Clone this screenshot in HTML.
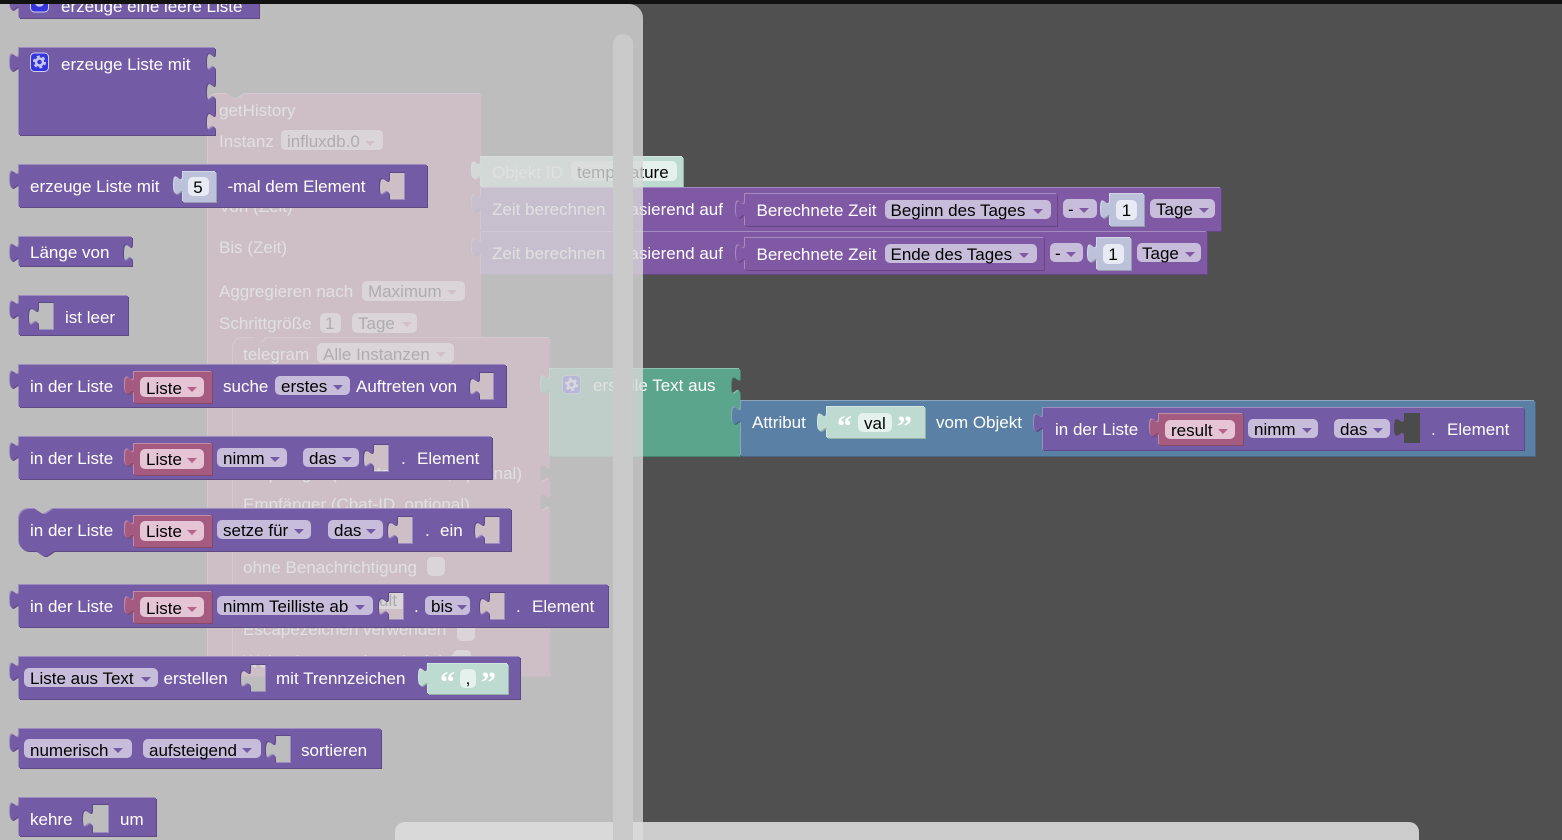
<!DOCTYPE html>
<html><head><meta charset="utf-8"><style>
html,body{margin:0;padding:0;background:#505050;width:1562px;height:840px;overflow:hidden}
svg{display:block;position:absolute;left:0;top:0}
text{font-family:"Liberation Sans",sans-serif;font-size:17px;white-space:pre}
.w{fill:#fff}.k{fill:#000}
.q{font-family:"Liberation Serif",serif;font-weight:bold;font-size:30px;fill:#fff}
path{fill-rule:evenodd}
.p{fill:#745ba5;filter:drop-shadow(1px 1px 0 #5d4984) drop-shadow(-1px -1px 0 #9e8cc0)}
.v{fill:#8059a5;filter:drop-shadow(1px 1px 0 #664784) drop-shadow(-1px -1px 0 #a68bc0)}
.r{fill:#a55b80;filter:drop-shadow(1px 1px 0 #844966) drop-shadow(-1px -1px 0 #c08ca6)}
.g{fill:#5ba58c;filter:drop-shadow(1px 1px 0 #498470) drop-shadow(-1px -1px 0 #8cc0ae)}
.b{fill:#5b80a5;filter:drop-shadow(1px 1px 0 #496684) drop-shadow(-1px -1px 0 #8ca6c0)}
.s{fill:#bdc2db;filter:drop-shadow(1px 1px 0 #979bb0) drop-shadow(-1px -1px 0 #d2d5e6)}
.t{fill:#bddbd1;filter:drop-shadow(1px 1px 0 #97afa7) drop-shadow(-1px -1px 0 #d2e6df)}
.d{fill:#c7bddb}.dr{fill:#e4c4d5}.fn{fill:#e9ebf4}.ft{fill:#e4f1ec}
.a{fill:#745ba5}.ar{fill:#b5648c}.ap{fill:#8059a5}
</style></head><body>
<svg width="1562" height="840" viewBox="0 0 1562 840" xmlns="http://www.w3.org/2000/svg">
<rect width="1562" height="840" fill="#505050"/>

<!-- workspace: getHistory -->
<path class="r" d="M208,104a10,10 0 0 1 10,-10H227l7.500,5h3l7.500,-5H481V676H208Z"/>
<path class="r" d="M550,338V464c0,12.500 -10,-10 -10,9.400s10,-3.100 10,9.400V493c0,12.500 -10,-10 -10,9.400s10,-3.100 10,9.400V676H233V348a10,10 0 0 1 10,-10H255l4,4h4l4,-4Z"/>
<text x="219" y="116" class="w">getHistory</text>
<text x="219" y="147" class="w">Instanz</text>
<rect x="281" y="130" width="102" height="20" rx="5" class="dr"/><text x="287" y="147" class="k">influxdb.0</text><path class="ar" d="M365,141h10l-5,5z"/>
<text x="219" y="212" class="w">Von (Zeit)</text>
<text x="219" y="253" class="w">Bis (Zeit)</text>
<text x="219" y="297" class="w">Aggregieren nach</text>
<rect x="362" y="281" width="103" height="20" rx="5" class="dr"/><text x="368" y="297" class="k">Maximum</text><path class="ar" d="M447,290h10l-5,5z"/>
<text x="219" y="329" class="w">Schrittgröße</text>
<rect x="320" y="313" width="21" height="20" rx="5" class="dr"/><text x="325" y="329" class="k">1</text>
<rect x="352" y="313" width="65" height="20" rx="5" class="dr"/><text x="358" y="329" class="k">Tage</text><path class="ar" d="M402,322h10l-5,5z"/>
<text x="243" y="360" class="w">telegram</text>
<rect x="317" y="343" width="137" height="20" rx="5" class="dr"/><text x="323" y="360" class="k">Alle Instanzen</text><path class="ar" d="M436,352h10l-5,5z"/>
<text x="522" y="479" text-anchor="end" class="w">Empfänger (Benutzername, optional)</text>
<text x="243" y="510" class="w">Empfänger (Chat-ID, optional)</text>
<text x="243" y="573" class="w">ohne Benachrichtigung</text><rect x="427" y="557" width="18" height="19" rx="5" class="dr"/>
<rect x="345" y="590" width="62" height="19" rx="5" class="dr"/><text x="397" y="606" text-anchor="end" class="k">Default</text>
<text x="243" y="635" class="w">Escapezeichen verwenden</text><rect x="457" y="622" width="18" height="19" rx="5" class="dr"/>
<text x="243" y="667" class="w">Webseitenvorschau deaktivieren</text><rect x="453" y="650" width="18" height="19" rx="5" class="dr"/>

<!-- workspace: Objekt ID -->
<path class="t" d="M481,157H683V187H481V180c0,-12.500 -9,10 -9,-9.400s9,3.100 9,-9.400Z"/>
<text x="492" y="178" class="w">Objekt ID</text>
<rect x="571" y="161" width="106" height="20" rx="5" class="ft"/><text x="577" y="178" class="k">temperature</text>

<!-- workspace: Zeit 1 -->
<path class="v" d="M481,188H1221V231H481V213c0,-12.500 -9,10 -9,-9.400s9,3.100 9,-9.400Z"/>
<text x="492" y="215" class="w">Zeit berechnen</text>
<text x="723" y="215" text-anchor="end" class="w">basierend auf</text>
<path class="v" d="M745,194H1057V226H745V219c0,-12.500 -9,10 -9,-9.400s9,3.100 9,-9.400Z"/>
<text x="756.500" y="216" class="w">Berechnete Zeit</text>
<rect x="885" y="200" width="166" height="19" rx="5" class="d"/><text x="890.500" y="216" class="k">Beginn des Tages</text><path class="ap" d="M1033,209h10l-5,5z"/>
<rect x="1063" y="199" width="34" height="19" rx="5" class="d"/><text x="1068" y="215" class="k">-</text><path class="ap" d="M1079,208h10l-5,5z"/>
<path class="s" d="M1110,194H1144V226H1110V219c0,-12.500 -9,10 -9,-9.400s9,3.100 9,-9.400Z"/>
<rect x="1116" y="200" width="21" height="20" rx="5" class="fn"/><text x="1126.500" y="216" text-anchor="middle" class="k">1</text>
<rect x="1150" y="199" width="65" height="19" rx="5" class="d"/><text x="1156" y="215" class="k">Tage</text><path class="ap" d="M1199,208h10l-5,5z"/>

<!-- workspace: Zeit 2 -->
<path class="v" d="M481,232H1207V274H481V257c0,-12.500 -9,10 -9,-9.400s9,3.100 9,-9.400Z"/>
<text x="492" y="259" class="w">Zeit berechnen</text>
<text x="723" y="259" text-anchor="end" class="w">basierend auf</text>
<path class="v" d="M745,238H1044V270H745V263c0,-12.500 -9,10 -9,-9.400s9,3.100 9,-9.400Z"/>
<text x="756.500" y="260" class="w">Berechnete Zeit</text>
<rect x="885" y="244" width="152" height="19" rx="5" class="d"/><text x="890.500" y="260" class="k">Ende des Tages</text><path class="ap" d="M1019,253h10l-5,5z"/>
<rect x="1050" y="243" width="33" height="19" rx="5" class="d"/><text x="1055" y="259" class="k">-</text><path class="ap" d="M1066,252h10l-5,5z"/>
<path class="s" d="M1097,238H1131V270H1097V263c0,-12.500 -9,10 -9,-9.400s9,3.100 9,-9.400Z"/>
<rect x="1103" y="244" width="21" height="20" rx="5" class="fn"/><text x="1113" y="260" text-anchor="middle" class="k">1</text>
<rect x="1137" y="243" width="64" height="19" rx="5" class="d"/><text x="1142" y="259" class="k">Tage</text><path class="ap" d="M1185,252h10l-5,5z"/>

<!-- workspace: erstelle Text aus -->
<path class="g" d="M550,369H740V376c0,12.500 -9,-10 -9,9.400s9,-3.100 9,9.400V456H550V394c0,-12.500 -9,10 -9,-9.400s9,3.100 9,-9.400Z"/>
<rect x="562.500" y="375.500" width="18" height="18" rx="4" fill="#3535e0" stroke="#aab" />
<circle cx="571.500" cy="384.500" r="3.500" fill="none" stroke="#d5d5f5" stroke-width="2.500"/>
<circle cx="571.500" cy="384.500" r="5.500" fill="none" stroke="#d5d5f5" stroke-width="2" stroke-dasharray="3 2.760"/>
<text x="593" y="391" class="w">erstelle Text aus</text>

<!-- workspace: Attribut -->
<path class="b" d="M741,401H1535V456H741V425c0,-12.500 -9,10 -9,-9.400s9,3.100 9,-9.400Z"/>
<text x="752" y="428" class="w">Attribut</text>
<path class="t" d="M827,407H925V438H827V432c0,-12.500 -9,10 -9,-9.400s9,3.100 9,-9.400Z"/>
<text x="837" y="436" class="q">“</text>
<rect x="858" y="413" width="34" height="19" rx="5" class="ft"/><text x="864" y="429" class="k">val</text>
<text x="897" y="436" class="q">”</text>
<text x="936" y="428" class="w">vom Objekt</text>
<path class="p" d="M1043,408H1524V450H1043V432c0,-12.500 -9,10 -9,-9.400s9,3.100 9,-9.400Z"/>
<text x="1055" y="435" class="w">in der Liste</text>
<path class="r" d="M1159,414H1243V445H1159V437c0,-12.500 -9,10 -9,-9.400s9,3.100 9,-9.400Z"/>
<rect x="1165" y="420" width="70" height="19" rx="5" class="dr"/><text x="1171" y="436" class="k">result</text><path class="ar" d="M1218,429h10l-5,5z"/>
<rect x="1248" y="419" width="70" height="19" rx="5" class="d"/><text x="1254" y="435" class="k">nimm</text><path class="a" d="M1302,428h10l-5,5z"/>
<rect x="1334" y="419" width="56" height="19" rx="5" class="d"/><text x="1340" y="435" class="k">das</text><path class="a" d="M1373,428h10l-5,5z"/>
<path d="M1420,413H1404V418c0,12.500 -10,-10 -10,9.400s10,-3.100 10,9.400V443H1420Z" fill="#4b4b4b"/>
<text x="1431" y="435" class="w">.</text><text x="1447" y="435" class="w">Element</text>

<!-- flyout overlay -->
<path d="M0,4H629a14,14 0 0 1 14,14V840H0Z" fill="#d8d8d8" fill-opacity=".8"/>

<!-- flyout blocks -->
<path class="p" d="M19,-13H259V18H19V11c0,-12.500 -9,10 -9,-9.400s9,3.100 9,-9.400Z"/>
<rect x="30.500" y="-7" width="18" height="19" rx="4" fill="#3535e0" stroke="#cfcff5"/>
<circle cx="39.500" cy="2" r="3.500" fill="none" stroke="#c9c9ee" stroke-width="2.500"/>
<text x="61" y="12" class="w">erzeuge eine leere Liste</text>

<path class="p" d="M19,48H215V52c0,12.500 -9,-10 -9,9.400s9,-3.100 9,9.400V82c0,12.500 -9,-10 -9,9.400s9,-3.100 9,9.400V112c0,12.500 -9,-10 -9,9.400s9,-3.100 9,9.400V135H19V72c0,-12.500 -9,10 -9,-9.400s9,3.100 9,-9.400Z"/>
<rect x="30.500" y="53" width="18" height="18.500" rx="4" fill="#3535e0" stroke="#cfcff5"/>
<circle cx="39.500" cy="62" r="3.500" fill="none" stroke="#c9c9ee" stroke-width="2.500"/>
<circle cx="39.500" cy="62" r="5.500" fill="none" stroke="#c9c9ee" stroke-width="2" stroke-dasharray="3 2.760"/>
<text x="61" y="70" class="w">erzeuge Liste mit</text>

<path class="p" d="M19,165H427V207H19V189c0,-12.500 -9,10 -9,-9.400s9,3.100 9,-9.400Z M405,172H389V177c0,12.500 -10,-10 -10,9.400s10,-3.100 10,9.400V200H405Z"/>
<text x="30" y="192" class="w">erzeuge Liste mit</text>
<path class="s" d="M183,172H216V202H183V195c0,-12.500 -9,10 -9,-9.400s9,3.100 9,-9.400Z"/>
<rect x="188" y="177" width="21" height="19" rx="5" class="fn"/><text x="198" y="193" text-anchor="middle" class="k">5</text>
<text x="227.500" y="192" class="w">-mal dem Element</text>

<path class="p" d="M19,237H132V243c0,12.500 -9,-10 -9,9.400s9,-3.100 9,9.400V266H19V262c0,-12.500 -9,10 -9,-9.400s9,3.100 9,-9.400Z"/>
<text x="30" y="258" class="w">Länge von</text>

<path class="p" d="M19,296H128V335H19V319c0,-12.500 -9,10 -9,-9.400s9,3.100 9,-9.400Z M54,302H38V307c0,12.500 -10,-10 -10,9.400s10,-3.100 10,9.400V330H54Z"/>
<text x="65" y="323" class="w">ist leer</text>

<!-- in der Liste suche -->
<path class="p" d="M19,365H506V407H19V389c0,-12.500 -9,10 -9,-9.400s9,3.100 9,-9.400Z M494,372H479V377c0,12.500 -10,-10 -10,9.400s10,-3.100 10,9.400V400H494Z"/>
<text x="30" y="392" class="w">in der Liste</text>
<path class="r" d="M134,372H212V403H134V395c0,-12.500 -9,10 -9,-9.400s9,3.100 9,-9.400Z"/>
<rect x="140" y="377" width="64" height="20" rx="5" class="dr"/><text x="146" y="394" class="k">Liste</text><path class="ar" d="M187,387h10l-5,5z"/>
<text x="223" y="392" class="w">suche</text>
<rect x="275" y="376" width="75" height="19" rx="5" class="d"/><text x="281" y="392" class="k">erstes</text><path class="a" d="M333,385h10l-5,5z"/>
<text x="356" y="392" class="w">Auftreten von</text>

<!-- nimm -->
<path class="p" d="M19,437H492V479H19V461c0,-12.500 -9,10 -9,-9.400s9,3.100 9,-9.400Z M389,444H373V449c0,12.500 -10,-10 -10,9.400s10,-3.100 10,9.400V472H389Z"/>
<text x="30" y="464" class="w">in der Liste</text>
<path class="r" d="M134,444H212V475H134V467c0,-12.500 -9,10 -9,-9.400s9,3.100 9,-9.400Z"/>
<rect x="140" y="449" width="64" height="20" rx="5" class="dr"/><text x="146" y="465" class="k">Liste</text><path class="ar" d="M187,458h10l-5,5z"/>
<rect x="217" y="448" width="70" height="19" rx="5" class="d"/><text x="223" y="464" class="k">nimm</text><path class="a" d="M270,457h10l-5,5z"/>
<rect x="303" y="448" width="56" height="19" rx="5" class="d"/><text x="309" y="464" class="k">das</text><path class="a" d="M342,457h10l-5,5z"/>
<text x="401" y="464" class="w">.</text><text x="417" y="464" class="w">Element</text>

<!-- setze -->
<path class="p" d="M19,519a10,10 0 0 1 10,-10H35l7.500,5h3l7.500,-5H511V551H54l-7.500,5h-3l-7.500,-5H29a10,10 0 0 1 -10,-10Z M413,516H397V521c0,12.500 -10,-10 -10,9.400s10,-3.100 10,9.400V544H413Z M500,516H484V521c0,12.500 -10,-10 -10,9.400s10,-3.100 10,9.400V544H500Z"/>
<text x="30" y="536" class="w">in der Liste</text>
<path class="r" d="M134,516H212V547H134V539c0,-12.500 -9,10 -9,-9.400s9,3.100 9,-9.400Z"/>
<rect x="140" y="521" width="64" height="20" rx="5" class="dr"/><text x="146" y="537" class="k">Liste</text><path class="ar" d="M187,530h10l-5,5z"/>
<rect x="217" y="520" width="94" height="19" rx="5" class="d"/><text x="223" y="536" class="k">setze für</text><path class="a" d="M294,529h10l-5,5z"/>
<rect x="328" y="520" width="55" height="19" rx="5" class="d"/><text x="334" y="536" class="k">das</text><path class="a" d="M366,529h10l-5,5z"/>
<text x="425" y="536" class="w">.</text><text x="440" y="536" class="w">ein</text>

<!-- Teilliste -->
<path class="p" d="M19,585H608V627H19V609c0,-12.500 -9,10 -9,-9.400s9,3.100 9,-9.400Z M404,592H388V597c0,12.500 -10,-10 -10,9.400s10,-3.100 10,9.400V620H404Z M505,592H489V597c0,12.500 -10,-10 -10,9.400s10,-3.100 10,9.400V620H505Z"/>
<text x="30" y="612" class="w">in der Liste</text>
<path class="r" d="M134,592H212V623H134V615c0,-12.500 -9,10 -9,-9.400s9,3.100 9,-9.400Z"/>
<rect x="140" y="597" width="64" height="20" rx="5" class="dr"/><text x="146" y="614" class="k">Liste</text><path class="ar" d="M187,607h10l-5,5z"/>
<rect x="217" y="596" width="156" height="19" rx="5" class="d"/><text x="223" y="612" class="k">nimm Teilliste ab</text><path class="a" d="M355,605h10l-5,5z"/>
<text x="414" y="612" class="w">.</text>
<rect x="425" y="596" width="45" height="19" rx="5" class="d"/><text x="431" y="612" class="k">bis</text><path class="a" d="M457,605h10l-5,5z"/>
<text x="516" y="612" class="w">.</text><text x="532" y="612" class="w">Element</text>

<!-- Liste aus Text -->
<path class="p" d="M19,657H520V699H19V681c0,-12.500 -9,10 -9,-9.400s9,3.100 9,-9.400Z M266,664H250V669c0,12.500 -10,-10 -10,9.400s10,-3.100 10,9.400V692H266Z"/>
<rect x="24" y="668" width="134" height="19" rx="5" class="d"/><text x="30" y="684" class="k">Liste aus Text</text><path class="a" d="M141,677h10l-5,5z"/>
<text x="163.500" y="684" class="w">erstellen</text>
<text x="276" y="684" class="w">mit Trennzeichen</text>
<path class="t" d="M428,664H508V694H428V687c0,-12.500 -9,10 -9,-9.400s9,3.100 9,-9.400Z"/>
<text x="440" y="692" class="q">“</text>
<rect x="460" y="669" width="16" height="19" rx="5" class="ft"/><text x="468" y="684" text-anchor="middle" class="k">,</text>
<text x="481" y="692" class="q">”</text>

<!-- sortieren -->
<path class="p" d="M19,729H381V768H19V752c0,-12.500 -9,10 -9,-9.400s9,3.100 9,-9.400Z M291,735H275V740c0,12.500 -10,-10 -10,9.400s10,-3.100 10,9.400V763H291Z"/>
<rect x="24" y="739" width="108" height="19" rx="5" class="d"/><text x="30" y="756" class="k">numerisch</text><path class="a" d="M113,748h10l-5,5z"/>
<rect x="143" y="739" width="118" height="19" rx="5" class="d"/><text x="149" y="756" class="k">aufsteigend</text><path class="a" d="M242,748h10l-5,5z"/>
<text x="301" y="756" class="w">sortieren</text>

<!-- kehre -->
<path class="p" d="M19,798H156V836H19V821c0,-12.500 -9,10 -9,-9.400s9,3.100 9,-9.400Z M109,804H92V809c0,12.500 -10,-10 -10,9.400s10,-3.100 10,9.400V833H109Z"/>
<text x="30" y="825" class="w">kehre</text><text x="120" y="825" class="w">um</text>

<!-- scrollbars -->
<rect x="395" y="822" width="1024" height="30" rx="10" fill="#cccccc"/>
<path d="M643,822H405a10,10 0 0 0 -10,10V840H643Z" fill="#d9d9d9"/>
<rect x="613" y="34" width="20" height="820" rx="10" fill="#cacaca"/>

<rect x="0" y="0" width="1562" height="4" fill="#111111"/>
</svg>
</body></html>
